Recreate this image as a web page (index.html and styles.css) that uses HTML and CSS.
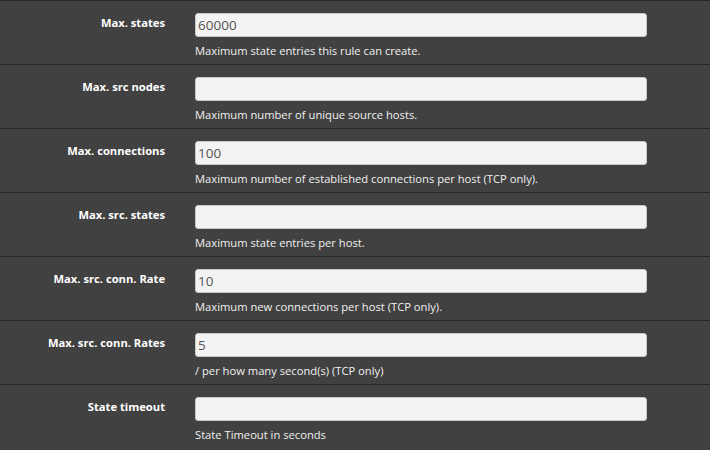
FILE: index.html
```html
<!DOCTYPE html>
<html>
<head>
<meta charset="utf-8">
<link rel="stylesheet" href="styles.css">
</head>
<body>
<div class="form">
  <div class="row">
    <label class="lbl">Max. states</label>
    <div class="field">
      <input class="inp" type="text" value="60000">
      <span class="help">Maximum state entries this rule can create.</span>
    </div>
  </div>
  <div class="row">
    <label class="lbl">Max. src nodes</label>
    <div class="field">
      <input class="inp" type="text" value="">
      <span class="help">Maximum number of unique source hosts.</span>
    </div>
  </div>
  <div class="row">
    <label class="lbl">Max. connections</label>
    <div class="field">
      <input class="inp" type="text" value="100">
      <span class="help">Maximum number of established connections per host (TCP only).</span>
    </div>
  </div>
  <div class="row">
    <label class="lbl">Max. src. states</label>
    <div class="field">
      <input class="inp" type="text" value="">
      <span class="help">Maximum state entries per host.</span>
    </div>
  </div>
  <div class="row">
    <label class="lbl">Max. src. conn. Rate</label>
    <div class="field">
      <input class="inp" type="text" value="10">
      <span class="help">Maximum new connections per host (TCP only).</span>
    </div>
  </div>
  <div class="row">
    <label class="lbl">Max. src. conn. Rates</label>
    <div class="field">
      <input class="inp" type="text" value="5">
      <span class="help">/ per how many second(s) (TCP only)</span>
    </div>
  </div>
  <div class="row">
    <label class="lbl">State timeout</label>
    <div class="field">
      <input class="inp" type="text" value="">
      <span class="help">State Timeout in seconds</span>
    </div>
  </div>
</div>
</body>
</html>
```

FILE: styles.css
```css
html, body {
  margin: 0;
  padding: 0;
  background: #414141;
}
body {
  font-family: "Open Sans", "DejaVu Sans", sans-serif;
  color: #ffffff;
}
.form {
  display: flex;
  flex-direction: column;
}
.row {
  display: flex;
  height: 63px;
  border-top: 1px solid #262626;
  background: #414141;
}
.lbl {
  width: 165px;
  box-sizing: border-box;
  text-align: right;
  font-weight: 700;
  font-size: 11.2px;
  padding-top: 14px;
  line-height: 15px;
}
.field {
  margin-left: 30px;
  width: 452px;
  padding-top: 12px;
  display: flex;
  flex-direction: column;
}
.inp {
  box-sizing: border-box;
  width: 452px;
  height: 24px;
  margin: 0;
  padding: 0 2px;
  background: #f3f3f3;
  border: 1px solid #c8c8c8;
  border-radius: 3px;
  font-family: "Open Sans", "DejaVu Sans", sans-serif;
  font-size: 13.5px;
  color: #555555;
  outline: none;
}
.help {
  margin-top: 6px;
  font-size: 11.2px;
  line-height: 16px;
  color: #f0f0f0;
}
```
